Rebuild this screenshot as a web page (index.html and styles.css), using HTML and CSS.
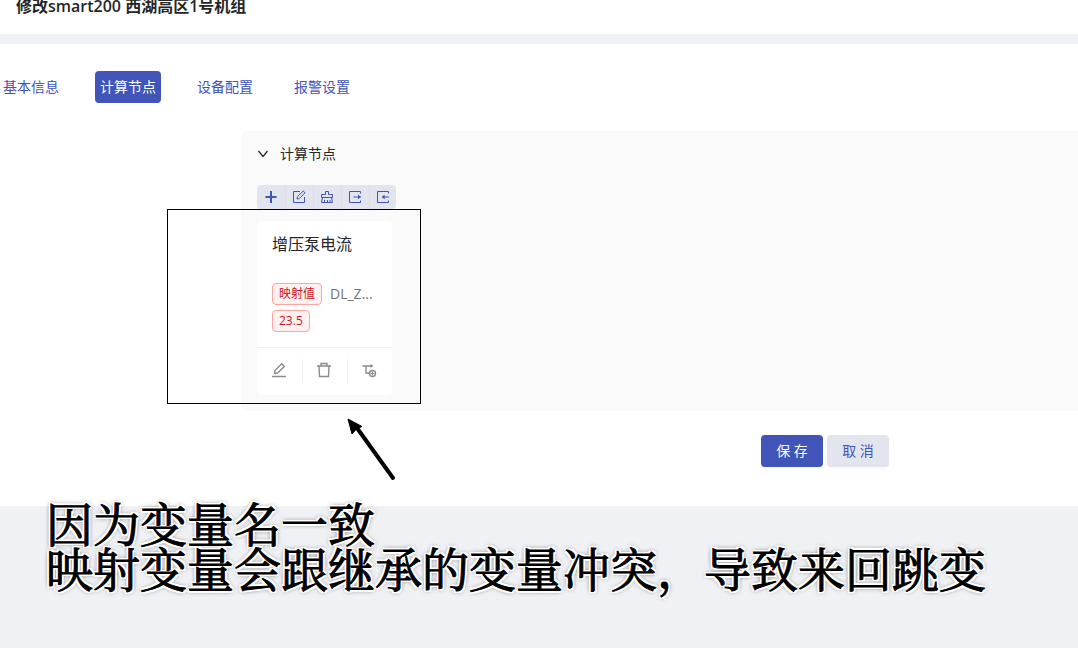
FILE: index.html
```html
<!DOCTYPE html>
<html lang="zh-CN">
<head>
<meta charset="utf-8">
<title>修改smart200 西湖高区1号机组</title>
<link rel="stylesheet" href="styles.css">
</head>
<body>
<header class="page-header"><h1 class="page-title">修改smart200 西湖高区1号机组</h1></header>
<main class="content">
  <nav class="tabs">
    <a class="tab" href="#basic">基本信息</a>
    <a class="tab tab-active" href="#nodes" aria-current="page">计算节点</a>
    <a class="tab" href="#device">设备配置</a>
    <a class="tab" href="#alarm">报警设置</a>
  </nav>
  <section class="panel">
    <button class="panel-header" type="button" aria-expanded="true">
      <svg class="chevron" viewBox="0 0 12 12"><path d="M1.500 3 6 8.500 10.500 3"/></svg>
      <span>计算节点</span>
    </button>
    <div class="toolbar">
      <button class="tool" type="button" aria-label="新增"><svg viewBox="0 0 14 14"><path class="bold" d="M7 1v12M1.500 7h11"/></svg></button>
      <button class="tool" type="button" aria-label="编辑"><svg viewBox="0 0 14 14"><path d="M8 1.500H1.500v11h11V7"/><path d="m5 9 .400-2.300L11.200 1l1.800 1.800L7.300 8.600z"/></svg></button>
      <button class="tool" type="button" aria-label="清空"><svg viewBox="0 0 14 14"><path d="M5.500 4.500v-3h3v3h4v3h-11v-3zM2.500 7.500l-1 5h11l-1-5M4.500 12.500V10M7.500 12.500V10M10 12.500V10"/></svg></button>
      <button class="tool" type="button" aria-label="导出"><svg viewBox="0 0 14 14"><path d="M12.500 3.500v-2h-11v11h11v-2M5.500 7h7"/><path class="fill" d="m10 4.700 3.200 2.300L10 9.300z"/></svg></button>
      <button class="tool" type="button" aria-label="导入"><svg viewBox="0 0 14 14"><path d="M12.500 3.500v-2h-11v11h11v-2M7 7h6"/><path class="fill" d="M8.700 4.700 5.500 7l3.200 2.300z"/></svg></button>
    </div>
    <article class="card">
      <div class="card-body">
        <h2 class="card-title">增压泵电流</h2>
        <div class="card-row"><span class="tag">映射值</span><span class="variable">DL_Z...</span></div>
        <div class="card-row"><span class="tag">23.5</span></div>
      </div>
      <div class="card-actions">
        <button class="action" type="button" aria-label="编辑"><svg viewBox="0 0 16 16"><path d="M1 14.500h14M3.500 11.500l.500-3L10.700 1.800l2.600 2.600L6.500 11z"/></svg></button>
        <button class="action" type="button" aria-label="删除"><svg viewBox="0 0 16 16"><path d="M1 4h14M5 4V1.500h6V4M3 4l.500 10.500h9L13 4"/></svg></button>
        <button class="action" type="button" aria-label="添加子节点"><svg viewBox="0 0 16 16"><path d="M1.500 4h9M5 4v7h3"/><path class="solid" d="m9.500 2 3 2-3 2z"/><circle class="ring" cx="11.500" cy="11.500" r="3"/><path class="thin" d="M9.500 11.500h4M11.500 9.500v4"/></svg></button>
      </div>
    </article>
  </section>
  <div class="form-actions">
    <button class="button button-primary" type="button">保 存</button>
    <button class="button" type="button">取 消</button>
  </div>
</main>
<div class="highlight"></div>
<svg class="arrow" viewBox="0 0 50 64"><path class="arrow-line" d="M10 10 46 60"/><path d="M1 1 15 8.500 9.500 11 5 16z"/></svg>
<p class="note">因为变量名一致<br>映射变量会跟继承的变量冲突，导致来回跳变</p>
</body>
</html>
```
FILE: styles.css
```css
* { box-sizing: border-box; }
body {
  margin: 0;
  min-height: 100vh;
  overflow: hidden;
  background: #f0f1f5;
  color: #262626;
  font: 14px/22px "Open Sans", "Noto Sans CJK SC", sans-serif;
}
button { font: inherit; border: 0; cursor: pointer; }
svg { fill: none; stroke: currentColor; display: block; }
.page-header { display: flow-root; background: #fff; padding: 0 16px 16px; }
.page-title { margin: -6px 0 0; font-size: 16px; line-height: 24px; font-weight: 600; }
.content { margin-top: 10px; padding: 27px 0 39px; background: #fff; }
.tabs { display: flex; gap: 31px; margin-left: -2px; }
.tab { padding: 5px; border-radius: 4px; color: #4154b8; text-decoration: none; }
.tab-active { background: #4154b8; color: #fff; }
.panel {
  margin: 28px 0 0 241px;
  padding: 0 16px 16px;
  border-radius: 6px 0 0 6px;
  background: #fafafa;
}
.panel-header {
  display: flex;
  align-items: center;
  gap: 11px;
  width: 100%;
  padding: 12px 0;
  background: none;
  color: #262626;
}
.chevron { width: 12px; height: 12px; stroke-width: 1.2; }
.toolbar {
  display: inline-flex;
  margin-top: 8px;
  border-radius: 4px;
  overflow: hidden;
  background: #e2e5ed;
  vertical-align: top;
}
.tool {
  display: grid;
  place-items: center;
  width: 28px;
  height: 24px;
  padding: 0;
  background: none;
  color: #4154b8;
}
.tool + .tool { box-shadow: inset 1px 0 #dbdfe9; }
.tool:last-child { width: 27px; }
.tool svg { width: 14px; height: 14px; }
.tool .bold { stroke-width: 2; }
.tool .fill { fill: currentColor; stroke: none; }
.card { width: 135px; margin-top: 12px; border-radius: 4px; background: #fff; }
.card-body { padding: 11px 15px 13px; }
.card-title { margin: 0 0 24px; font-size: 16px; line-height: 24px; font-weight: 400; }
.card-row { display: flex; align-items: center; gap: 8px; height: 27px; }
.tag {
  padding: 0 6px;
  border: 1px solid #ffa39e;
  border-radius: 4px;
  background: #fff1f0;
  color: #cf1322;
  font-size: 12px;
  line-height: 20px;
}
.variable { color: #737373; }
.card-actions { display: flex; border-top: 1px solid #f0f0f0; padding: 11px 0 12px; }
.action {
  flex: 1;
  display: grid;
  place-items: center;
  height: 24px;
  padding: 0 2px 2px 0;
  background: none;
  color: #8c8c8c;
}
.action + .action { box-shadow: inset 1px 0 #f0f0f0; }
.action svg { width: 16px; height: 16px; stroke-width: 1.4; }
.action .solid { fill: currentColor; stroke: none; }
.action .ring { stroke-width: 1.4; }
.action .thin { stroke-width: 1; }
.form-actions { display: flex; gap: 4px; margin: 24px 0 0 761px; }
.button {
  width: 62px;
  height: 32px;
  padding: 0;
  border-radius: 4px;
  background: #e2e5ed;
  color: #4154b8;
  box-shadow: 0 2px 0 rgba(0, 0, 0, 0.02);
}
.button-primary { background: #4154b8; color: #fff; }
.highlight {
  position: absolute;
  left: 167px;
  top: 209px;
  width: 254px;
  height: 195px;
  border: 1px solid #000;
  pointer-events: none;
}
.arrow { position: absolute; left: 347px; top: 418px; width: 50px; height: 64px; color: #000; fill: #000; }
.arrow-line { stroke-width: 4; stroke-linecap: round; }
.note {
  position: absolute;
  left: 46px;
  top: 504px;
  margin: 0;
  color: #000;
  font-family: "Liberation Serif", "Noto Serif CJK SC", "Noto Sans CJK SC", serif;
  font-size: 47px;
  line-height: 45px;
  white-space: nowrap;
  -webkit-text-stroke: 1px #000;
  text-shadow: 2px 2px 0 #fff, -2px 2px 0 #fff, 2px -2px 0 #fff, -2px -2px 0 #fff,
    2px 0 0 #fff, -2px 0 0 #fff, 0 2px 0 #fff, 0 -2px 0 #fff,
    0 0 5px #555, 0 0 5px #777;
}
```
